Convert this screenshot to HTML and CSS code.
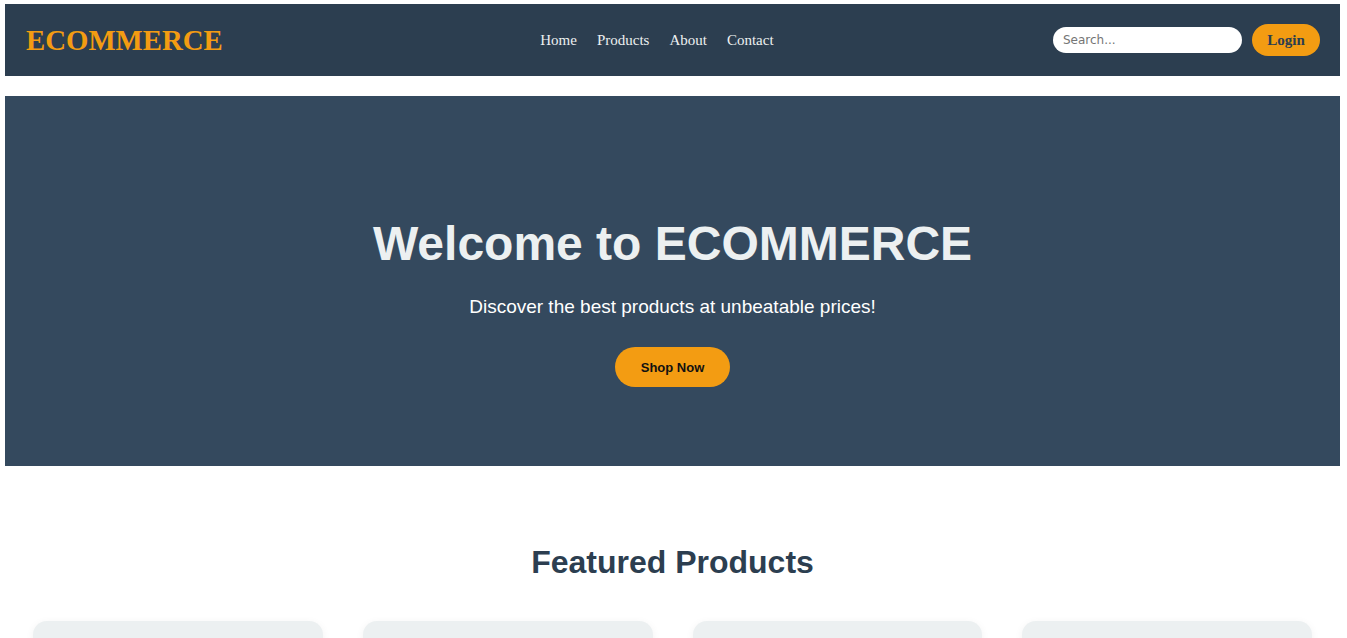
FILE: index.html
```html
<!DOCTYPE html>
<html lang="en">
<head>
<meta charset="utf-8">
<title>ECOMMERCE</title>
<link rel="stylesheet" href="styles.css">
</head>
<body>
<header class="site-header">
  <div class="logo">ECOMMERCE</div>
  <nav class="main-nav">
    <a href="#">Home</a>
    <a href="#">Products</a>
    <a href="#">About</a>
    <a href="#">Contact</a>
  </nav>
  <div class="header-actions">
    <input class="search" type="text" placeholder="Search...">
    <button class="login-btn">Login</button>
  </div>
</header>

<section class="hero">
  <h1>Welcome to ECOMMERCE</h1>
  <p>Discover the best products at unbeatable prices!</p>
  <button class="shop-btn">Shop Now</button>
</section>

<section class="featured">
  <h2>Featured Products</h2>
  <div class="product-grid">
    <div class="product-card"><div class="product-img"></div><h3>Product 1</h3><p>$19.99</p></div>
    <div class="product-card"><div class="product-img"></div><h3>Product 2</h3><p>$29.99</p></div>
    <div class="product-card"><div class="product-img"></div><h3>Product 3</h3><p>$39.99</p></div>
    <div class="product-card"><div class="product-img"></div><h3>Product 4</h3><p>$49.99</p></div>
  </div>
</section>
</body>
</html>
```

FILE: styles.css
```css
html, body {
  background: #ffffff;
}
body {
  margin: 4px 7px 0 5px;
  font-family: "Liberation Serif", serif;
}

.site-header {
  height: 72px;
  background: #2c3e50;
  display: flex;
  align-items: center;
  justify-content: space-between;
  padding: 0 20px;
}
.logo {
  color: #f39c12;
  font-family: "Liberation Serif", serif;
  font-weight: bold;
  font-size: 28.8px;
  padding-left: 1px;
}
.main-nav {
  display: flex;
  gap: 20px;
  margin-left: 38px;
}
.main-nav a {
  color: #ecf0f1;
  text-decoration: none;
  font-size: 15px;
  font-family: "Liberation Serif", serif;
}
.header-actions {
  display: flex;
  align-items: center;
  gap: 10px;
}
.search {
  width: 189px;
  height: 26px;
  box-sizing: border-box;
  border: none;
  border-radius: 13px;
  padding: 0 10px;
  font-family: "DejaVu Sans", sans-serif;
  font-size: 12px;
  background: #fff;
  outline: none;
}
.search::placeholder {
  color: #757575;
}
.login-btn {
  width: 68px;
  height: 32px;
  border: none;
  border-radius: 16px;
  background: #f39c12;
  color: #2c3e50;
  font-family: "Liberation Serif", serif;
  font-weight: bold;
  font-size: 15px;
  padding: 0;
}

.hero {
  margin-top: 20px;
  background: #34495e;
  height: 370px;
  box-sizing: border-box;
  padding-top: 120px;
  text-align: center;
  color: #ecf0f1;
  font-family: "Liberation Sans", Arial, sans-serif;
}
.hero h1 {
  margin: 0 0 25px;
  font-size: 48px;
  font-weight: bold;
  line-height: normal;
}
.hero p {
  margin: 0 0 29px;
  font-size: 19px;
  color: #ffffff;
}
.shop-btn {
  width: 115px;
  height: 40px;
  border: none;
  border-radius: 20px;
  background: #f39c12;
  color: #111;
  font-family: "Liberation Sans", Arial, sans-serif;
  font-weight: bold;
  font-size: 13px;
  padding: 0;
}

.featured {
  padding: 78px 28px 0 28px;
  font-family: "Liberation Sans", Arial, sans-serif;
}
.featured h2 {
  margin: 0 0 40px;
  text-align: center;
  font-size: 32px;
  color: #2c3e50;
  line-height: normal;
}
.product-grid {
  display: grid;
  grid-template-columns: repeat(4, 1fr);
  gap: 40px;
}
.product-card {
  background: #ecf0f1;
  border-radius: 14px;
  box-shadow: 0 2px 8px rgba(0, 0, 0, 0.06);
  padding: 20px;
  height: 300px;
  box-sizing: border-box;
}
.product-img {
  height: 180px;
  background: #dfe4e6;
  border-radius: 8px;
}
.product-card h3 {
  margin: 12px 0 6px;
  color: #2c3e50;
}
.product-card p {
  margin: 0;
  color: #f39c12;
}
```
